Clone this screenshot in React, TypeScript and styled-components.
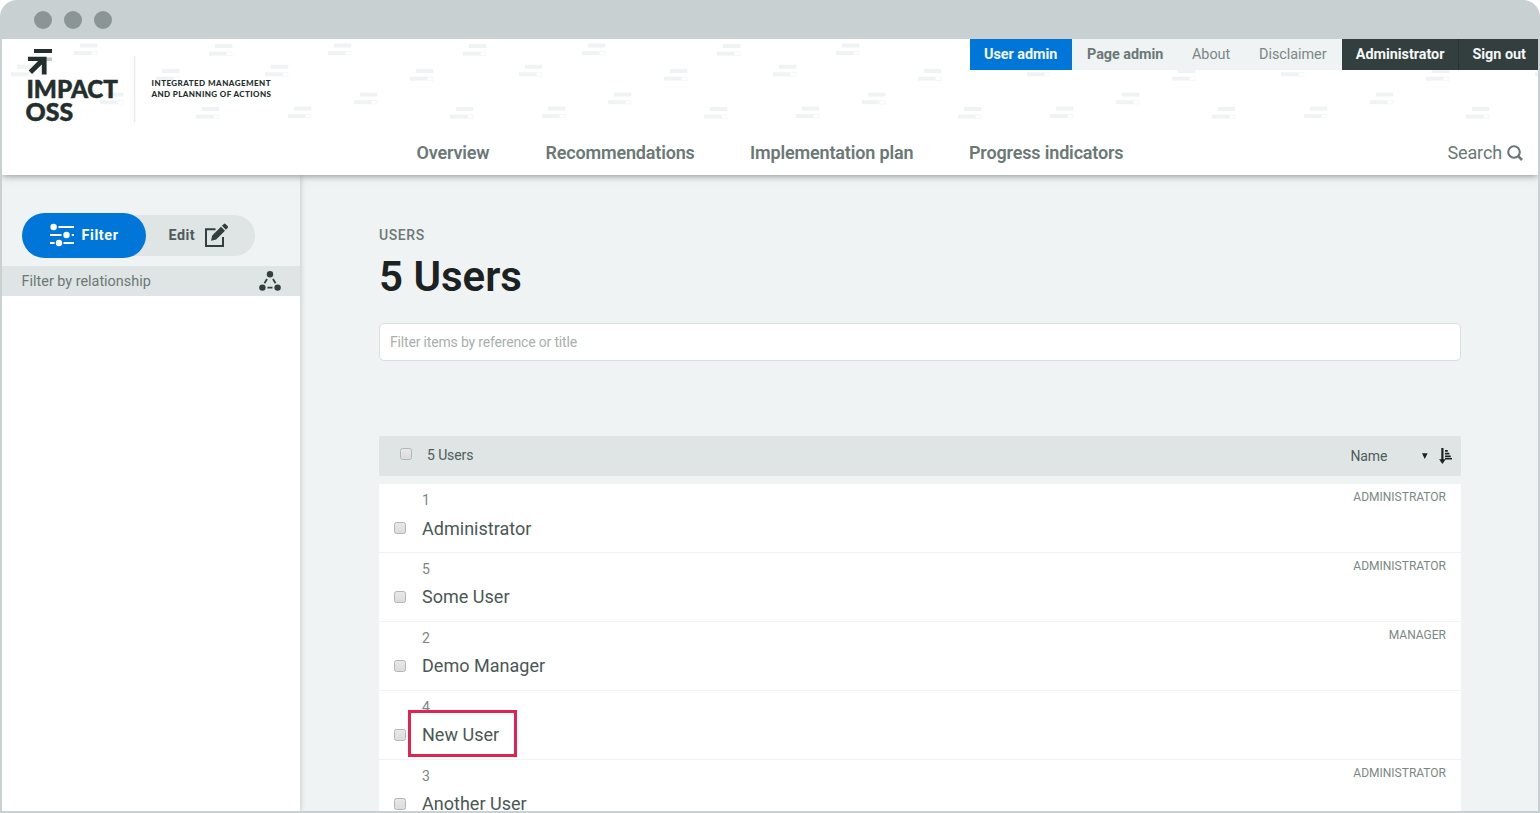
import React from 'react';
import styled, { createGlobalStyle } from 'styled-components';

const Global = createGlobalStyle`
  * { box-sizing: border-box; }
  html, body { margin: 0; background: #fff; overflow: hidden; }
  body { font-family: Roboto, sans-serif; color: #333f3e; }
  h1 { margin: 0; }
`;

const Frame = styled.div`
  width: 1540px;
  height: 813px;
  padding: 0 2px 2px;
  display: flex;
  flex-direction: column;
  background: #c8d0d1;
  border-radius: 17px 17px 0 0;
  overflow: hidden;
`;

const TitleBar = styled.div`
  height: 39px;
  flex: none;
  display: flex;
  align-items: center;
  gap: 12px;
  padding: 1px 0 0 32px;
`;

const Dot = styled.span`
  width: 18px;
  height: 18px;
  border-radius: 50%;
  background: #8c9596;
`;

const Header = styled.header`
  position: relative;
  z-index: 2;
  height: 136px;
  flex: none;
  display: flex;
  justify-content: space-between;
  background: #fff;
  box-shadow: 0 0 8px rgba(0, 0, 0, 0.5);
  clip-path: inset(0 0 -14px 0);
`;

const Backdrop = styled.svg`
  position: absolute;
  left: 0;
  top: 0;
`;

const Brand = styled.svg`
  position: relative;
  flex: none;
`;

const HeaderRight = styled.div`
  position: relative;
  flex: 1;
  display: flex;
  flex-direction: column;
  justify-content: space-between;
`;

const AdminNav = styled.nav`
  display: flex;
  height: 31px;
  align-self: flex-end;
  background: #eff3f4;
`;

const AdminLink = styled.a<{ $w: number; $pad: number; $tone?: 'active' | 'dark'; $bold?: boolean; $divided?: boolean }>`
  width: ${p => p.$w}px;
  padding-left: ${p => p.$pad}px;
  height: 31px;
  line-height: 31px;
  font-size: 14.4px;
  white-space: nowrap;
  letter-spacing: -0.03px;
  font-weight: ${p => (p.$bold ? 700 : 400)};
  color: ${p => (p.$tone ? '#f4f8f9' : p.$bold ? '#6b7876' : '#7b8785')};
  background: ${p => (p.$tone === 'active' ? '#0077d8' : p.$tone === 'dark' ? '#333f3e' : 'transparent')};
  border-left: ${p => (p.$divided ? '1px solid #293332' : '0')};
`;

const NavRow = styled.div`
  display: flex;
  justify-content: space-between;
  padding: 0 15px 10px 114.4px;
  line-height: 24px;
`;

const MainNav = styled.nav`
  display: flex;
`;

const MainLink = styled.a<{ $w: number }>`
  width: ${p => p.$w}px;
  white-space: nowrap;
  font-size: 18px;
  font-weight: 600;
  letter-spacing: -0.16px;
  color: #6b7876;
`;

const Search = styled.a`
  display: flex;
  align-items: center;
  gap: 5px;
  font-size: 18px;
  letter-spacing: -0.12px;
  color: #6b7876;
`;

const Body = styled.div`
  flex: 1;
  min-height: 0;
  display: flex;
  overflow: hidden;
`;

const Sidebar = styled.aside`
  position: relative;
  z-index: 1;
  width: 298px;
  display: flex;
  flex-direction: column;
  background: #fff;
  box-shadow: 0 0 6px rgba(0, 0, 0, 0.22);
`;

const SideTop = styled.div`
  height: 91px;
  padding: 38px 0 0 20px;
  background: #eff3f4;
`;

const Toggle = styled.div`
  width: 233px;
  height: 44px;
  display: flex;
  align-items: center;
`;

const FilterButton = styled.button`
  position: relative;
  width: 124px;
  height: 45px;
  padding: 0 0 0 28px;
  display: flex;
  align-items: center;
  gap: 7.5px;
  border: 0;
  border-radius: 23px;
  background: #0077d8;
  color: #fff;
  font: 700 14.4px Roboto, sans-serif;
  letter-spacing: 0.6px;
`;

const EditButton = styled.button`
  width: 133px;
  height: 41px;
  margin-left: -24px;
  padding: 0 0 0 46.5px;
  display: flex;
  align-items: center;
  gap: 8px;
  border: 0;
  border-radius: 0 21px 21px 0;
  background: #dfe4e4;
  color: #4f5c5a;
  font: 700 14.4px Roboto, sans-serif;
  letter-spacing: 0.5px;
`;

const GroupHeader = styled.div`
  height: 30px;
  padding: 0 18.6px 0 19.6px;
  display: flex;
  align-items: center;
  justify-content: space-between;
  background: #dfe4e4;
  color: #6b7876;
  font-size: 14.4px;
`;

const Main = styled.main`
  flex: 1;
  padding: 50px 77px 0 79px;
  background: #eff3f4;
`;

const Kicker = styled.div`
  height: 20px;
  line-height: 20px;
  font-size: 14px;
  font-weight: 500;
  letter-spacing: 0.6px;
  color: #6b7876;
`;

const Title = styled.h1`
  height: 60px;
  line-height: 64px;
  font-size: 42px;
  font-weight: 600;
  color: #1c2121;
`;

const SearchBox = styled.div`
  margin-top: 18px;
  height: 38px;
  padding-left: 10px;
  line-height: 37px;
  border: 1px solid #dae0e0;
  border-radius: 5px;
  background: #fff;
  color: #a9afae;
  font-size: 14px;
  letter-spacing: -0.17px;
`;

const ListHeader = styled.div`
  margin-top: 75px;
  height: 40px;
  padding: 0 8px 0 21px;
  display: flex;
  align-items: center;
  background: #dfe4e4;
  color: #4f5c5a;
  font-size: 14px;
`;

const Count = styled.span`
  flex: 1;
  padding: 0 0 2px 15px;
  letter-spacing: -0.1px;
`;

const SortName = styled.span`
  width: 70.5px;
  letter-spacing: -0.15px;
`;

const Check = styled.span`
  display: block;
  flex: none;
  width: 12px;
  height: 12px;
  border: 1px solid #b3b6b6;
  border-radius: 2.5px;
  background: linear-gradient(#e8e8e8, #dcdcdc);
`;

const HeadCheck = styled(Check)`
  margin-bottom: 5px;
`;

const List = styled.div`
  margin-top: 8.4px;
`;

const Row = styled.div`
  height: 68.9px;
  padding: 0 15px 0 15px;
  display: flex;
  background: #fff;
  border-bottom: 1px solid #f0f3f4;
`;

const RowCheck = styled(Check)`
  margin-top: 38px;
`;

const RowText = styled.div`
  flex: 1;
  padding: 6px 0 0 16px;
`;

const RowId = styled.div`
  height: 20.2px;
  line-height: 20px;
  font-size: 14px;
  color: #7b8785;
`;

const RowName = styled.div`
  position: relative;
  width: fit-content;
  height: 36px;
  line-height: 36px;
  font-size: 18px;
  letter-spacing: 0.02px;
  color: #4a5755;
`;

const Highlight = styled.span`
  position: absolute;
  left: -14px;
  top: -7px;
  width: 109px;
  height: 47px;
  border: 3px solid #e2234f;
`;

const Role = styled.span`
  padding-top: 5px;
  line-height: 16px;
  font-size: 12px;
  color: #7b8785;
`;

const marks = [
  [74, 43.5], [209, 44], [11, 64.7], [156, 69], [100, 92.6], [196, 107], [34, 106.5],
];

const rows = [
  { id: 1, name: 'Administrator', role: 'ADMINISTRATOR' },
  { id: 5, name: 'Some User', role: 'ADMINISTRATOR' },
  { id: 2, name: 'Demo Manager', role: 'MANAGER' },
  { id: 4, name: 'New User', role: '', highlighted: true },
  { id: 3, name: 'Another User', role: 'ADMINISTRATOR' },
];

function HeaderPattern() {
  return (
    <Backdrop width="1536" height="136">
      <defs>
        <pattern id="marks" width="254" height="136" patternUnits="userSpaceOnUse">
          {marks.map(([x, y]) => (
            <g key={`${x}-${y}`} transform={`translate(${x - 2} ${y - 39})`}>
              <rect x="5.8" width="17.5" height="4" fill="#eff3f3" />
              <rect y="7.6" width="17.5" height="4" fill="#eff3f3" />
              <rect x="17.5" y="8" width="5.5" height="3.4" fill="#fff" stroke="#f3f6f6" strokeWidth="0.8" />
            </g>
          ))}
        </pattern>
      </defs>
      <rect width="1536" height="136" fill="url(#marks)" />
    </Backdrop>
  );
}

function Logo() {
  return (
    <Brand width="300" height="136" viewBox="2 39 300 136">
      <rect x="46" y="57.5" width="6" height="3.5" fill="#c3c8c7" />
      <path d="M34 49h18v4H34z M28 56.7h18.6V74.5h-4.8V64.6L32 74l-3.3-3.4 9.4-9.6H28z" fill="#242e2c" />
      <g fill="#242e2c" fontFamily="Lato, sans-serif" fontWeight="900">
        <text x="26.5" y="97.7" fontSize="25" textLength="91.5" lengthAdjust="spacingAndGlyphs" stroke="#242e2c" strokeWidth="0.5">IMPACT</text>
        <text x="25.6" y="121.2" fontSize="25" textLength="47.6" lengthAdjust="spacingAndGlyphs" stroke="#242e2c" strokeWidth="0.5">OSS</text>
        <text x="151.6" y="86.2" fontSize="8" textLength="119" lengthAdjust="spacing">INTEGRATED MANAGEMENT</text>
        <text x="151.4" y="97.4" fontSize="8" textLength="119.5" lengthAdjust="spacing">AND PLANNING OF ACTIONS</text>
      </g>
      <path d="M134.5 56v66" stroke="#e4e9e9" strokeWidth="1.4" />
    </Brand>
  );
}

export default function App() {
  return (
    <>
      <Global />
      <Frame>
        <TitleBar><Dot /><Dot /><Dot /></TitleBar>
        <Header>
          <HeaderPattern />
          <Logo />
          <HeaderRight>
            <AdminNav>
              <AdminLink $w={102.5} $pad={14.5} $tone="active" $bold>User admin</AdminLink>
              <AdminLink $w={105} $pad={15} $bold>Page admin</AdminLink>
              <AdminLink $w={67} $pad={15}>About</AdminLink>
              <AdminLink $w={97.5} $pad={15}>Disclaimer</AdminLink>
              <AdminLink $w={116.5} $pad={14.3} $tone="dark" $bold>Administrator</AdminLink>
              <AdminLink $w={80} $pad={13.5} $tone="dark" $bold $divided>Sign out</AdminLink>
            </AdminNav>
            <NavRow>
              <MainNav>
                <MainLink $w={129}>Overview</MainLink>
                <MainLink $w={204.6}>Recommendations</MainLink>
                <MainLink $w={219}>Implementation plan</MainLink>
                <MainLink $w={160}>Progress indicators</MainLink>
              </MainNav>
              <Search>
                Search
                <svg width="16" height="16" viewBox="0 0 16 16" fill="none" stroke="#6b7876" strokeWidth="2.1">
                  <circle cx="7" cy="7" r="5.8" />
                  <path d="M11.2 11.2L15 15" strokeWidth="2.6" />
                </svg>
              </Search>
            </NavRow>
          </HeaderRight>
        </Header>
        <Body>
          <Sidebar>
            <SideTop>
              <Toggle>
                <FilterButton>
                  <svg width="24" height="24" viewBox="0 0 24 24" fill="#fff" stroke="#fff" strokeWidth="1.9">
                    <path d="M8.5 4H24M0 12h11.5M21.8 12H24M0 20h4.5M13.5 20H24" />
                    <g stroke="none"><circle cx="3.6" cy="4" r="3.2" /><circle cx="16.5" cy="12" r="3.2" /><circle cx="9" cy="20" r="3.2" /></g>
                  </svg>
                  Filter
                </FilterButton>
                <EditButton>
                  Edit
                  <svg width="26" height="26" viewBox="0 0 26 26" fill="#333f3e">
                    <path d="M12.5 7.2H3V24H20V15" fill="none" stroke="#333f3e" strokeWidth="2" />
                    <path d="M8 18.8l1.2-5.2L18 4.8l4 4-8.8 8.8zM19 3.8l1.9-1.9q.8-.8 1.6 0l2.3 2.3q.8.8 0 1.6L22.9 7.8z" />
                  </svg>
                </EditButton>
              </Toggle>
            </SideTop>
            <GroupHeader>
              Filter by relationship
              <svg width="22" height="20" viewBox="0 0 22 20" fill="#333f3e" stroke="#333f3e" strokeWidth="1.8">
                <g stroke="none"><circle cx="11" cy="3.3" r="3.2" /><circle cx="3.4" cy="16.6" r="3.2" /><circle cx="18.6" cy="16.6" r="3.2" /></g>
                <path d="M8 8l-2.5 4.2M14 8l2.5 4.2M8.5 16.6h5" />
              </svg>
            </GroupHeader>
          </Sidebar>
          <Main>
            <Kicker>USERS</Kicker>
            <Title>5 Users</Title>
            <SearchBox>Filter items by reference or title</SearchBox>
            <ListHeader>
              <HeadCheck />
              <Count>5 Users</Count>
              <SortName>Name</SortName>
              <svg width="32" height="18" viewBox="0 0 32 18" fill="#1c2121">
                <path d="M1 6.2h5.6L3.8 12z" />
                <path d="M20.3 1h2.2v11.2h2.2L21.4 17l-3.3-4.8h2.2zM24 3h2.8v1.8H24zM24 5.7h4.4v1.8H24zM24 8.4h5.8v1.8H24zM24 10.9h7v1.6h-7z" />
              </svg>
            </ListHeader>
            <List>
              {rows.map(r => (
                <Row key={r.id}>
                  <RowCheck />
                  <RowText>
                    <RowId>{r.id}</RowId>
                    <RowName>{r.name}{r.highlighted && <Highlight />}</RowName>
                  </RowText>
                  <Role>{r.role}</Role>
                </Row>
              ))}
            </List>
          </Main>
        </Body>
      </Frame>
    </>
  );
}
